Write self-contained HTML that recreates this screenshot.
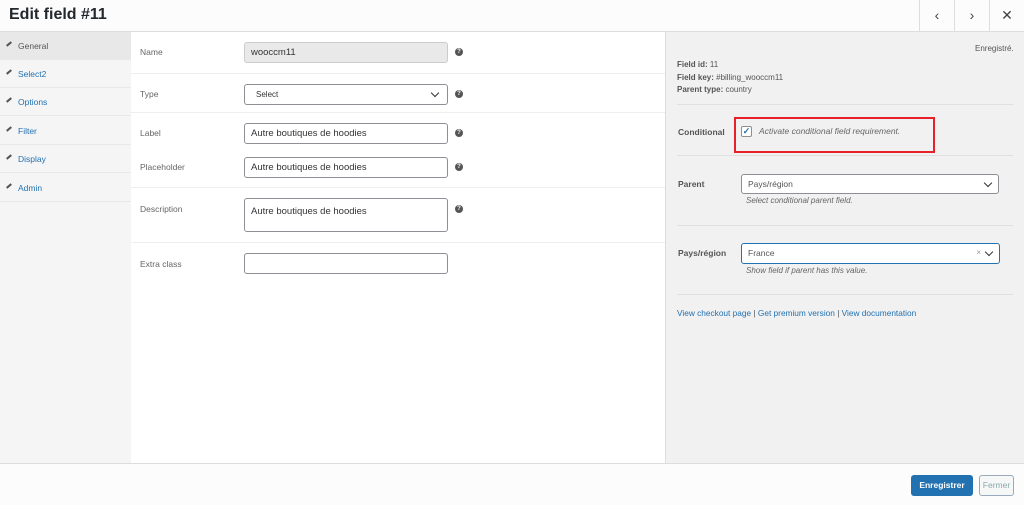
<!DOCTYPE html>
<html><head><meta charset="utf-8"><style>
*{box-sizing:border-box;margin:0;padding:0}
body{width:1024px;height:505px;overflow:hidden;background:#fff;font-family:"Liberation Sans",sans-serif;font-size:9px;color:#555;position:relative}
.a{position:absolute}
.hdr{left:0;top:0;width:1024px;height:32px;background:#fcfcfc;border-bottom:1px solid #ddd}
.hdr h1{position:absolute;left:9px;top:6px;font-size:16px;font-weight:bold;color:#23282d}
.nb{top:0;width:35px;height:32px;border-left:1px solid #ddd;text-align:center;line-height:30px;font-size:14px;color:#444}
.side{left:0;top:32px;width:131px;height:431px;background:#f5f5f5}
.si{position:absolute;left:0;width:131px;height:28px;border-bottom:1px solid #e8e8e8;color:#2271b1;padding-left:18px;line-height:28px;font-size:8.5px}
.si.act{background:#e8e8e8;color:#555}
.si:before{content:"";position:absolute;left:6px;top:11px;width:6px;height:2px;background:#555;transform:rotate(-40deg)}
.main{left:131px;top:32px;width:534px;height:431px;background:#fff}
.lbl{position:absolute;font-size:8.5px;color:#666;left:140px}
.inp{position:absolute;left:244px;width:204px;height:21px;border:1px solid #8c8f94;border-radius:3px;background:#fff;font-size:9.5px;padding-left:6px;line-height:19px;color:#333}
.sep{position:absolute;left:131px;width:534px;height:1px;background:#eee}
.q{position:absolute;left:455px;width:8px;height:8px;border-radius:50%;background:#555;color:#fff;font-size:6px;text-align:center;line-height:8px;font-weight:bold}
.right{left:665px;top:32px;width:359px;height:431px;background:#f1f1f1;border-left:1px solid #ddd}
.rs{position:absolute;left:677px;width:336px;height:1px;background:#e0e0e0}
.rl{position:absolute;left:678px;font-weight:bold;font-size:8.5px;color:#555}
.ft{left:0;top:463px;width:1024px;height:42px;background:#fcfcfc;border-top:1px solid #ddd}
.chev{position:absolute;width:6px;height:6px;border-right:1.5px solid #333;border-bottom:1.5px solid #333;transform:rotate(45deg)}
</style></head><body>
<div class="a hdr"><h1>Edit field #11</h1></div>
<div class="a nb" style="left:919px">&#8249;</div>
<div class="a nb" style="left:954px">&#8250;</div>
<div class="a nb" style="left:989px">&#10005;</div>

<div class="a side">
<div class="si act" style="top:0">General</div>
<div class="si" style="top:28px">Select2</div>
<div class="si" style="top:56px">Options</div>
<div class="si" style="top:85px">Filter</div>
<div class="si" style="top:113px">Display</div>
<div class="si" style="top:142px">Admin</div>
</div>
<div class="a main"></div>
<div class="lbl" style="top:47px">Name</div>
<div class="inp" style="top:42px;background:#e9e9e9;border-color:#ccc">wooccm11</div>
<div class="q" style="top:48px">?</div>
<div class="sep" style="top:73px"></div>
<div class="lbl" style="top:89px">Type</div>
<div class="inp" style="top:84px;font-size:8px;padding-left:11px">Select<span class="chev" style="right:9px;top:5px"></span></div>
<div class="q" style="top:90px">?</div>
<div class="sep" style="top:112px"></div>
<div class="lbl" style="top:128px">Label</div>
<div class="inp" style="top:123px">Autre boutiques de hoodies</div>
<div class="q" style="top:129px">?</div>
<div class="lbl" style="top:162px">Placeholder</div>
<div class="inp" style="top:157px">Autre boutiques de hoodies</div>
<div class="q" style="top:163px">?</div>
<div class="sep" style="top:187px"></div>
<div class="lbl" style="top:204px">Description</div>
<div class="inp" style="top:198px;height:34px;line-height:26px">Autre boutiques de hoodies</div>
<div class="q" style="top:205px">?</div>
<div class="sep" style="top:242px"></div>
<div class="lbl" style="top:259px">Extra class</div>
<div class="inp" style="top:253px"></div>

<div class="a right"></div>
<div class="a" style="left:975px;top:44px;font-size:8px">Enregistré.</div>
<div class="a" style="left:677px;top:59px;font-size:8px;line-height:12.5px"><b>Field id:</b> 11<br><b>Field key:</b> #billing_wooccm11<br><b>Parent type:</b> country</div>
<div class="rs" style="top:104px"></div>
<div class="rl" style="top:127px">Conditional</div>
<div class="a" style="left:734px;top:117px;width:201px;height:36px;border:2px solid #e8202a"></div>
<div class="a" style="left:741px;top:126px;width:11px;height:11px;border:1px solid #8c8f94;border-radius:2px;background:#fff;color:#2271b1;font-size:9px;line-height:9px;text-align:center;font-weight:bold">&#10003;</div>
<div class="a" style="left:759px;top:126px;font-style:italic;font-size:8.5px;color:#666">Activate conditional field requirement.</div>
<div class="rs" style="top:155px"></div>
<div class="rl" style="top:179px">Parent</div>
<div class="a" style="left:741px;top:174px;width:258px;height:20px;border:1px solid #8c8f94;border-radius:3px;background:#fff;padding-left:6px;line-height:18px;font-size:8.5px">Pays/région<span class="chev" style="right:7px;top:5px"></span></div>
<div class="a" style="left:746px;top:196px;font-style:italic;font-size:8px;color:#666">Select conditional parent field.</div>
<div class="rs" style="top:225px"></div>
<div class="rl" style="top:248px">Pays/région</div>
<div class="a" style="left:741px;top:243px;width:259px;height:21px;border:1.5px solid #2271b1;border-radius:3px;background:#fff;padding-left:6px;line-height:18px;font-size:8.5px">France<span style="position:absolute;right:18px;top:0;font-size:8px;color:#999">×</span><span class="chev" style="right:7px;top:5px"></span></div>
<div class="a" style="left:746px;top:266px;font-style:italic;font-size:8px;color:#666">Show field if parent has this value.</div>
<div class="rs" style="top:294px"></div>
<div class="a" style="left:677px;top:308px;font-size:8.3px;color:#2271b1">View checkout page <span style="color:#555">|</span> Get premium version <span style="color:#555">|</span> View documentation</div>

<div class="a ft"></div>
<div class="a" style="left:911px;top:475px;width:62px;height:21px;background:#2271b1;border-radius:3px;color:#fff;font-size:8.5px;font-weight:bold;text-align:center;line-height:21px">Enregistrer</div>
<div class="a" style="left:979px;top:475px;width:35px;height:21px;border:1px solid #9ab;border-radius:3px;background:#f6f7f7;color:#8aa;font-size:8.5px;text-align:center;line-height:19px">Fermer</div>
</body></html>
